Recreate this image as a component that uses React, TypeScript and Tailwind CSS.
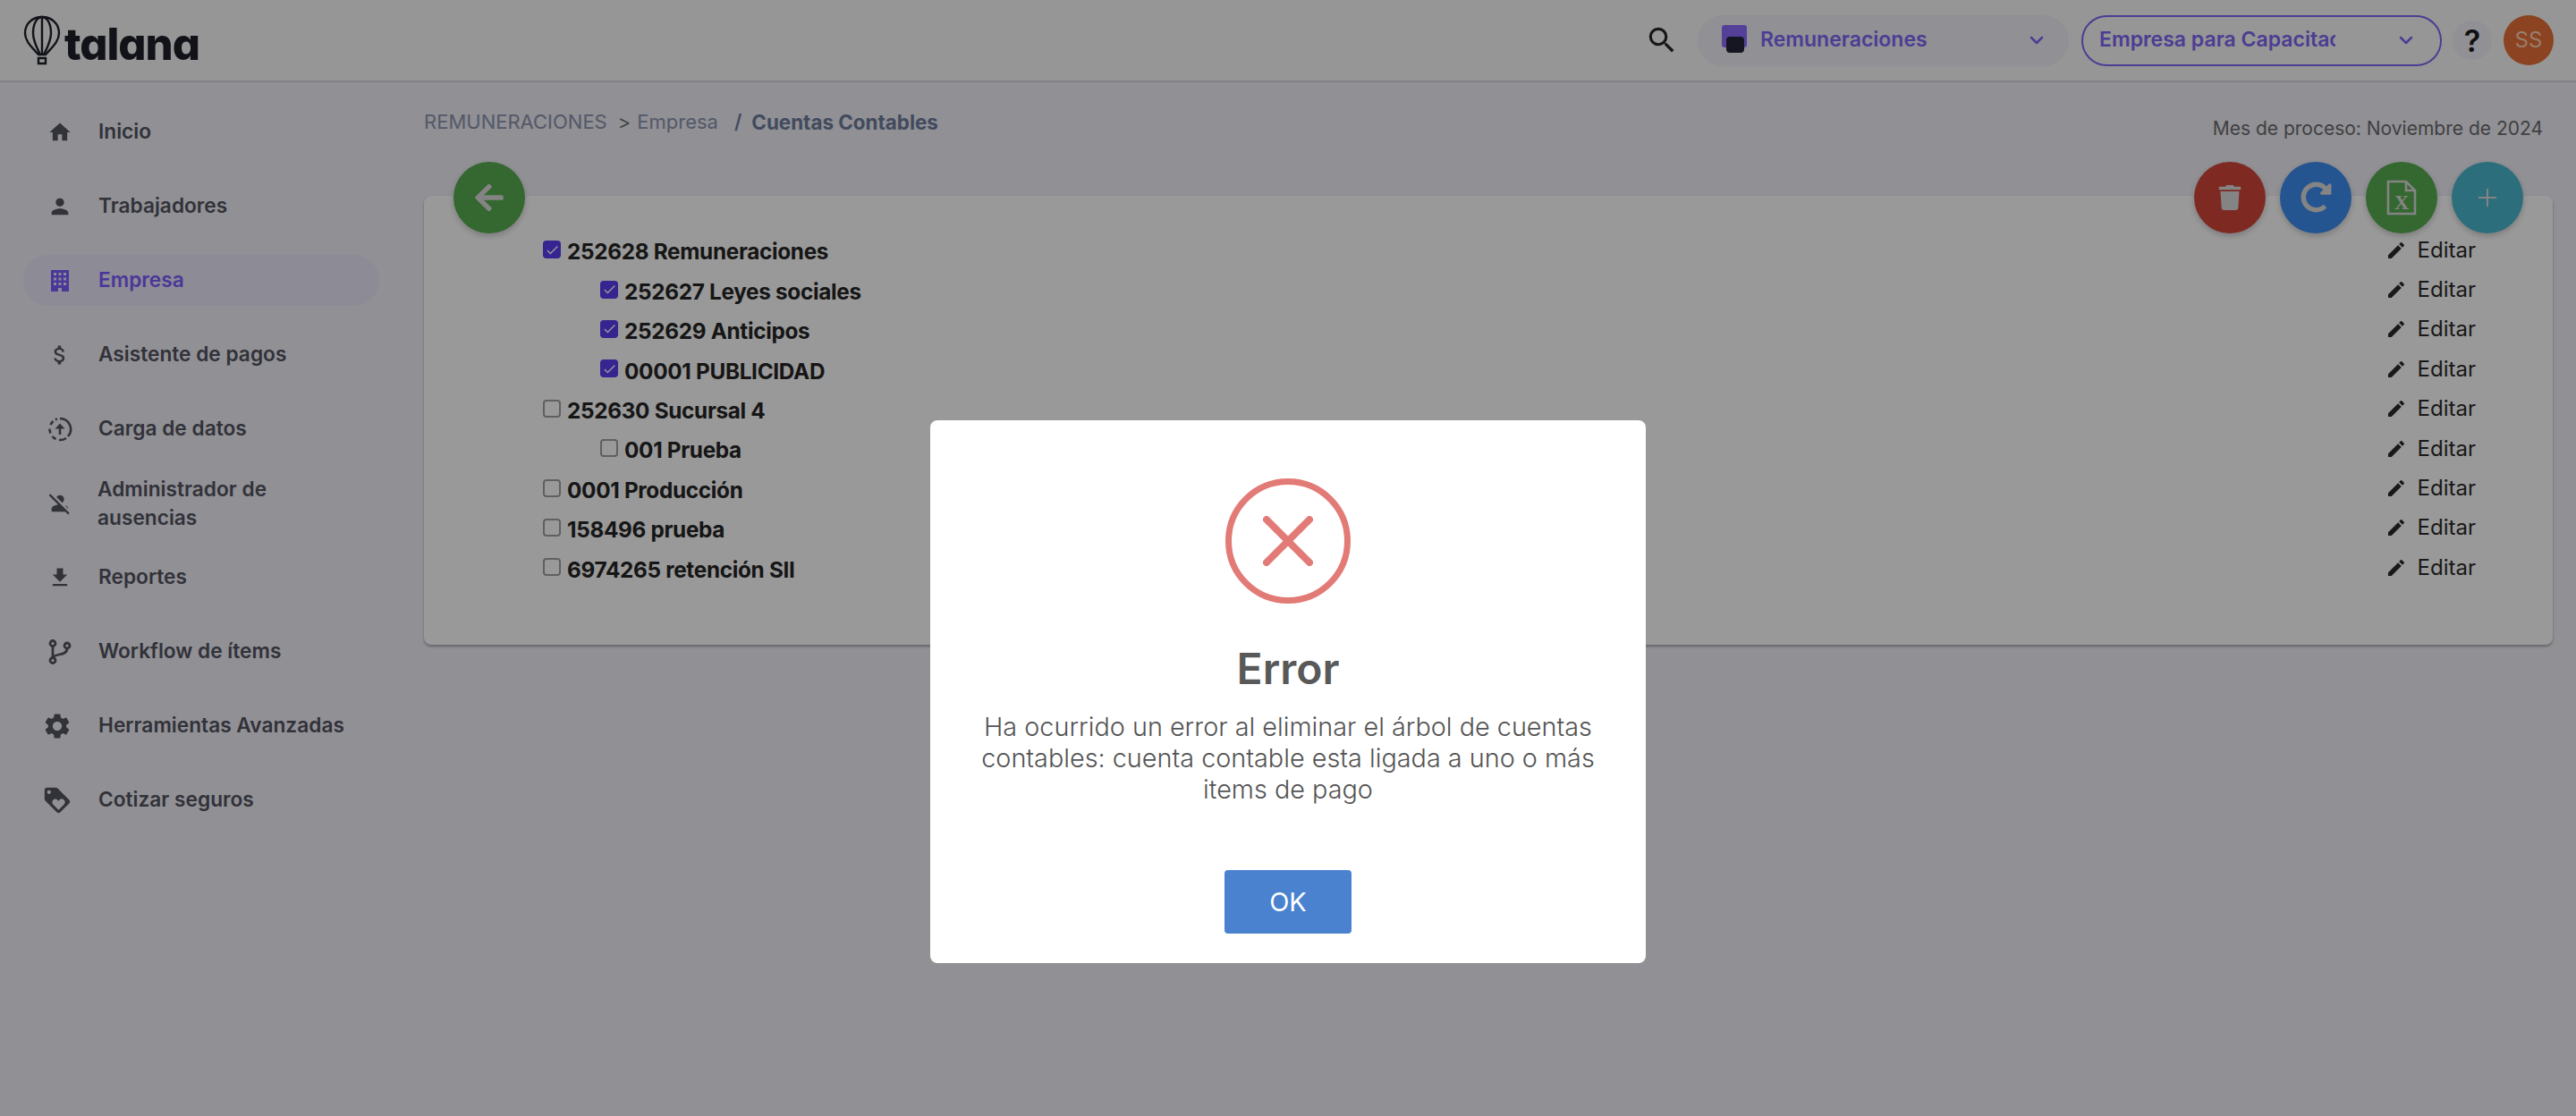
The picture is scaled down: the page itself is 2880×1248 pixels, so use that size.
import { ChevronDown, Plus } from "lucide-react";
import { FaArrowLeft, FaRedoAlt, FaTrash } from "react-icons/fa";
import {
  MdAttachMoney,
  MdCheck,
  MdEdit,
  MdFileDownload,
  MdHome,
  MdLoyalty,
  MdPerson,
  MdPersonOff,
  MdSearch,
  MdSettings,
} from "react-icons/md";

const BalloonLogo = () => (
  <svg width="42" height="56" viewBox="0 0 42 56" fill="none" stroke="#1e1f2b" strokeWidth="2.4">
    <path d="M21 2C10 2 2 9.5 2 20c0 9 7 15 15 24h8c8-9 15-15 15-24C40 9.5 32 2 21 2Z" />
    <path d="M21 2c-6 0-10 8-10 18 0 9 4 16 8 24M21 2c6 0 10 8 10 18 0 9-4 16-8 24" />
    <path d="M21 2v42" />
    <path d="M17 48h8v6h-8z" />
  </svg>
);

const BuildingIcon = () => (
  <svg width="20" height="24" viewBox="0 0 20 24" fill="#7d5cff">
    <path
      fillRule="evenodd"
      d="M0 0h20v24H12v-4H8v4H0ZM3 3v3h3V3Zm5.500 0v3h3V3ZM14 3v3h3V3ZM3 8.500v3h3v-3Zm5.500 0v3h3v-3Zm5.500 0v3h3v-3ZM3 14v3h3v-3Zm5.500 0v3h3v-3Zm5.500 0v3h3v-3Z"
    />
  </svg>
);

const UploadCircleIcon = () => (
  <svg width="28" height="28" viewBox="0 0 28 28" fill="none" stroke="#54545f" strokeWidth="2.600">
    <path d="M14 2a12 12 0 0 1 9 20" />
    <path d="M21 24a12 12 0 0 1-8 2" />
    <path d="M9.500 25a12 12 0 0 1-4-3" />
    <path d="M3.500 18.500a12 12 0 0 1-1-5" />
    <path d="M3.500 9a12 12 0 0 1 3-4" />
    <path d="M9 3.200a12 12 0 0 1 2-.7" />
    <path d="M14 20v-8" strokeWidth="2.600" />
    <path d="M14 7.500l5.500 6h-11z" fill="#54545f" stroke="none" />
  </svg>
);

const BranchIcon = () => (
  <svg width="26" height="28" viewBox="0 0 26 28" fill="none" stroke="#54545f" strokeWidth="2.800">
    <circle cx="5" cy="4.500" r="3" />
    <circle cx="5" cy="23.500" r="3" />
    <circle cx="21" cy="7" r="3" />
    <path d="M5 7.500v13M21 10c0 5-4 6-9 7-3 .6-5.500 1.500-7 3" />
  </svg>
);

const ExcelFileIcon = () => (
  <svg width="34" height="40" viewBox="0 0 34 40" fill="none" stroke="#dcdcdc" strokeWidth="2.600">
    <path d="M2 2h20l10 10v26H2Z" />
    <path d="M22 2v10h10" />
    <text
      x="17"
      y="33"
      textAnchor="middle"
      fontFamily="'Liberation Serif', serif"
      fontSize="23"
      fontWeight="700"
      fill="#dcdcdc"
      stroke="none"
    >
      X
    </text>
  </svg>
);

const menu = [
  { label: "Inicio", icon: <MdHome size={36} /> },
  { label: "Trabajadores", icon: <MdPerson size={34} /> },
  { label: "Empresa", icon: <BuildingIcon />, active: true },
  { label: "Asistente de pagos", icon: <MdAttachMoney size={34} /> },
  { label: "Carga de datos", icon: <UploadCircleIcon /> },
  { label: "Administrador de ausencias", icon: <MdPersonOff size={32} />, wrap: true },
  { label: "Reportes", icon: <MdFileDownload size={34} /> },
  { label: "Workflow de ítems", icon: <BranchIcon /> },
  { label: "Herramientas Avanzadas", icon: <MdSettings size={34} className="-ml-[6px]" /> },
  { label: "Cotizar seguros", icon: <MdLoyalty size={34} className="-ml-[6px]" /> },
];

const accounts = [
  { label: "252628 Remuneraciones", checked: true },
  { label: "252627 Leyes sociales", checked: true, nested: true },
  { label: "252629 Anticipos", checked: true, nested: true },
  { label: "00001 PUBLICIDAD", checked: true, nested: true },
  { label: "252630 Sucursal 4" },
  { label: "001 Prueba", nested: true },
  { label: "0001 Producción" },
  { label: "158496 prueba" },
  { label: "6974265 retención SII" },
];

export default function App() {
  return (
    <div className="relative h-[1248px] w-[2880px] overflow-hidden bg-[#f0f0f8] font-['Inter',sans-serif]">
      <header className="flex h-[92px] items-center border-b-2 border-[#d8d8dc] bg-[#f9fbf8] pr-[25px]">
        <div className="ml-[26px] flex items-end">
          <BalloonLogo />
          <span className="-mb-[5px] ml-[4px] text-[49px] leading-[56px] font-extrabold tracking-[-1px] text-[#1e1f2b] [font-feature-settings:'cv11']">
            talana
          </span>
        </div>
        <MdSearch size={38} className="ml-auto text-[#262626]" />
        <div className="ml-[21px] flex h-[57px] w-[415px] items-center rounded-full bg-[#f0f0f8] pl-[27px] pr-[24px]">
          <div className="relative mr-[15px] mt-[11px] h-[30px] w-[28px] self-start">
            <div className="h-[25px] w-[28px] rounded-[3px] bg-[#8c6cff]" />
            <div className="absolute left-[5px] top-[13px] h-[18px] w-[20px] rounded-[4px] bg-[#26263a]" />
          </div>
          <span className="-mt-[2px] text-[23px] font-semibold text-[#7f66f5]">Remuneraciones</span>
          <ChevronDown size={24} strokeWidth={2.500} className="ml-auto text-[#7f66f5]" />
        </div>
        <div className="ml-[14px] flex h-[57px] w-[403px] items-center rounded-full border-2 border-[#7f66f5] pl-[18px] pr-[26px]">
          <span className="-mt-[2px] w-[264px] overflow-hidden whitespace-nowrap text-[23px] font-semibold text-[#7f66f5]">
            Empresa para Capacitac
          </span>
          <ChevronDown size={24} strokeWidth={2.500} className="ml-auto text-[#7f66f5]" />
        </div>
        <div className="ml-[12px] flex h-[44px] w-[44px] items-center justify-center rounded-full bg-[#f0f0f8] text-[34px] font-semibold text-[#1c1c1c]">
          ?
        </div>
        <div className="ml-[13px] flex h-[56px] w-[56px] items-center justify-center rounded-full bg-[#e8703a] text-[24px] text-[#ffd0b4]">
          SS
        </div>
      </header>

      <div className="flex">
        <aside className="w-[474px] shrink-0 pl-[26px] pt-[27px]">
          {menu.map((item) => (
            <div
              key={item.label}
              className={`mb-[26px] flex h-[57px] w-[398px] items-center rounded-full pl-[27px] ${
                item.active ? "bg-[#ebe8fb] text-[#7d5cff]" : "text-[#54545f]"
              }`}
            >
              <div className="flex w-[28px] shrink-0 justify-center">{item.icon}</div>
              <span
                className={`ml-[29px] text-[22.700px] font-semibold ${
                  item.wrap ? "w-[290px] -translate-x-[1px] leading-[32px]" : ""
                }`}
              >
                {item.label}
              </span>
            </div>
          ))}
        </aside>

        <main className="flex-1 pr-[26px]">
          <div className="flex items-start pr-[11px] pt-[28px]">
            <div className="flex text-[22px] text-[#8c94ad]">
              <span>REMUNERACIONES</span>
              <span className="ml-[12px] text-[#6f6f6f]">&gt;</span>
              <span className="ml-[7px]">Empresa</span>
              <span className="ml-[18px] font-semibold text-[#6f7c9c]">/</span>
              <span className="ml-[11px] text-[22.400px] font-bold text-[#6f7c9c]">Cuentas Contables</span>
            </div>
            <span className="ml-auto mt-[8px] text-[21px] text-[#6c6c6c]">Mes de proceso: Noviembre de 2024</span>
          </div>

          <div className="relative mt-[59px] rounded-[8px] bg-white pb-[62px] pr-[86px] pt-[41px] shadow-[0_2px_3px_rgba(0,0,0,0.3)]">
            <button className="absolute -top-[38px] left-[33px] flex h-[80px] w-[80px] items-center justify-center rounded-full bg-[#58ad50] text-[#dcdcdc] shadow-[0_3px_6px_rgba(0,0,0,0.2)]">
              <FaArrowLeft size={36} />
            </button>
            <div className="absolute -top-[38px] right-[33px] flex gap-[16px]">
              <button className="flex h-[80px] w-[80px] items-center justify-center rounded-full bg-[#d2473a] text-[#dcdcdc] shadow-[0_3px_6px_rgba(0,0,0,0.2)]">
                <FaTrash size={28} />
              </button>
              <button className="flex h-[80px] w-[80px] items-center justify-center rounded-full bg-[#3f8ef0] text-[#dcdcdc] shadow-[0_3px_6px_rgba(0,0,0,0.2)]">
                <FaRedoAlt size={35} />
              </button>
              <button className="flex h-[80px] w-[80px] items-center justify-center rounded-full bg-[#58ad50] shadow-[0_3px_6px_rgba(0,0,0,0.2)]">
                <ExcelFileIcon />
              </button>
              <button className="flex h-[80px] w-[80px] items-center justify-center rounded-full bg-[#4ab8cf] text-[#dcdcdc] shadow-[0_3px_6px_rgba(0,0,0,0.2)]">
                <Plus size={32} strokeWidth={1.500} />
              </button>
            </div>

            {accounts.map((row) => (
              <div key={row.label} className="flex h-[44.400px] items-center">
                <div className={`flex items-center ${row.nested ? "pl-[197px]" : "pl-[133px]"}`}>
                  <div
                    className={`-mt-[5px] flex h-[20px] w-[20px] items-center justify-center rounded-[4px] ${
                      row.checked ? "bg-[#5a3df0] text-white" : "border-2 border-[#a0a0a0] bg-white"
                    }`}
                  >
                    {row.checked && <MdCheck size={17} />}
                  </div>
                  <span className="ml-[7px] text-[24.300px] font-bold tracking-[-0.3px] text-[#262626]">{row.label}</span>
                </div>
                <div className="-mt-[4px] ml-auto flex items-center text-[#2a2a2a]">
                  <MdEdit size={24} />
                  <span className="ml-[12px] text-[24px]">Editar</span>
                </div>
              </div>
            ))}
          </div>
        </main>
      </div>

      <div className="absolute inset-0 flex items-start justify-center bg-black/40 pt-[470px]">
        <div className="flex h-[607px] w-[800px] flex-col items-center rounded-[8px] bg-white">
          <div className="mt-[65px] flex h-[140px] w-[140px] items-center justify-center rounded-full border-[7px] border-[#e27a76]">
            <svg width="56" height="56" viewBox="0 0 56 56" stroke="#e27a76" strokeWidth="8" strokeLinecap="round">
              <path d="M4 4l48 48M52 4L4 52" />
            </svg>
          </div>
          <h2 className="mt-[44px] text-[48px] leading-[58px] font-semibold text-[#595959]">Error</h2>
          <p className="mt-[18px] w-[720px] text-center text-[28.800px] leading-[35px] font-light text-[#545454]">
            Ha ocurrido un error al eliminar el árbol de cuentas contables: cuenta contable esta ligada a uno o más
            items de pago
          </p>
          <button className="mt-[73px] h-[71px] w-[142px] rounded-[4px] bg-[#4a82d0] text-[29px] text-white">OK</button>
        </div>
      </div>
    </div>
  );
}
